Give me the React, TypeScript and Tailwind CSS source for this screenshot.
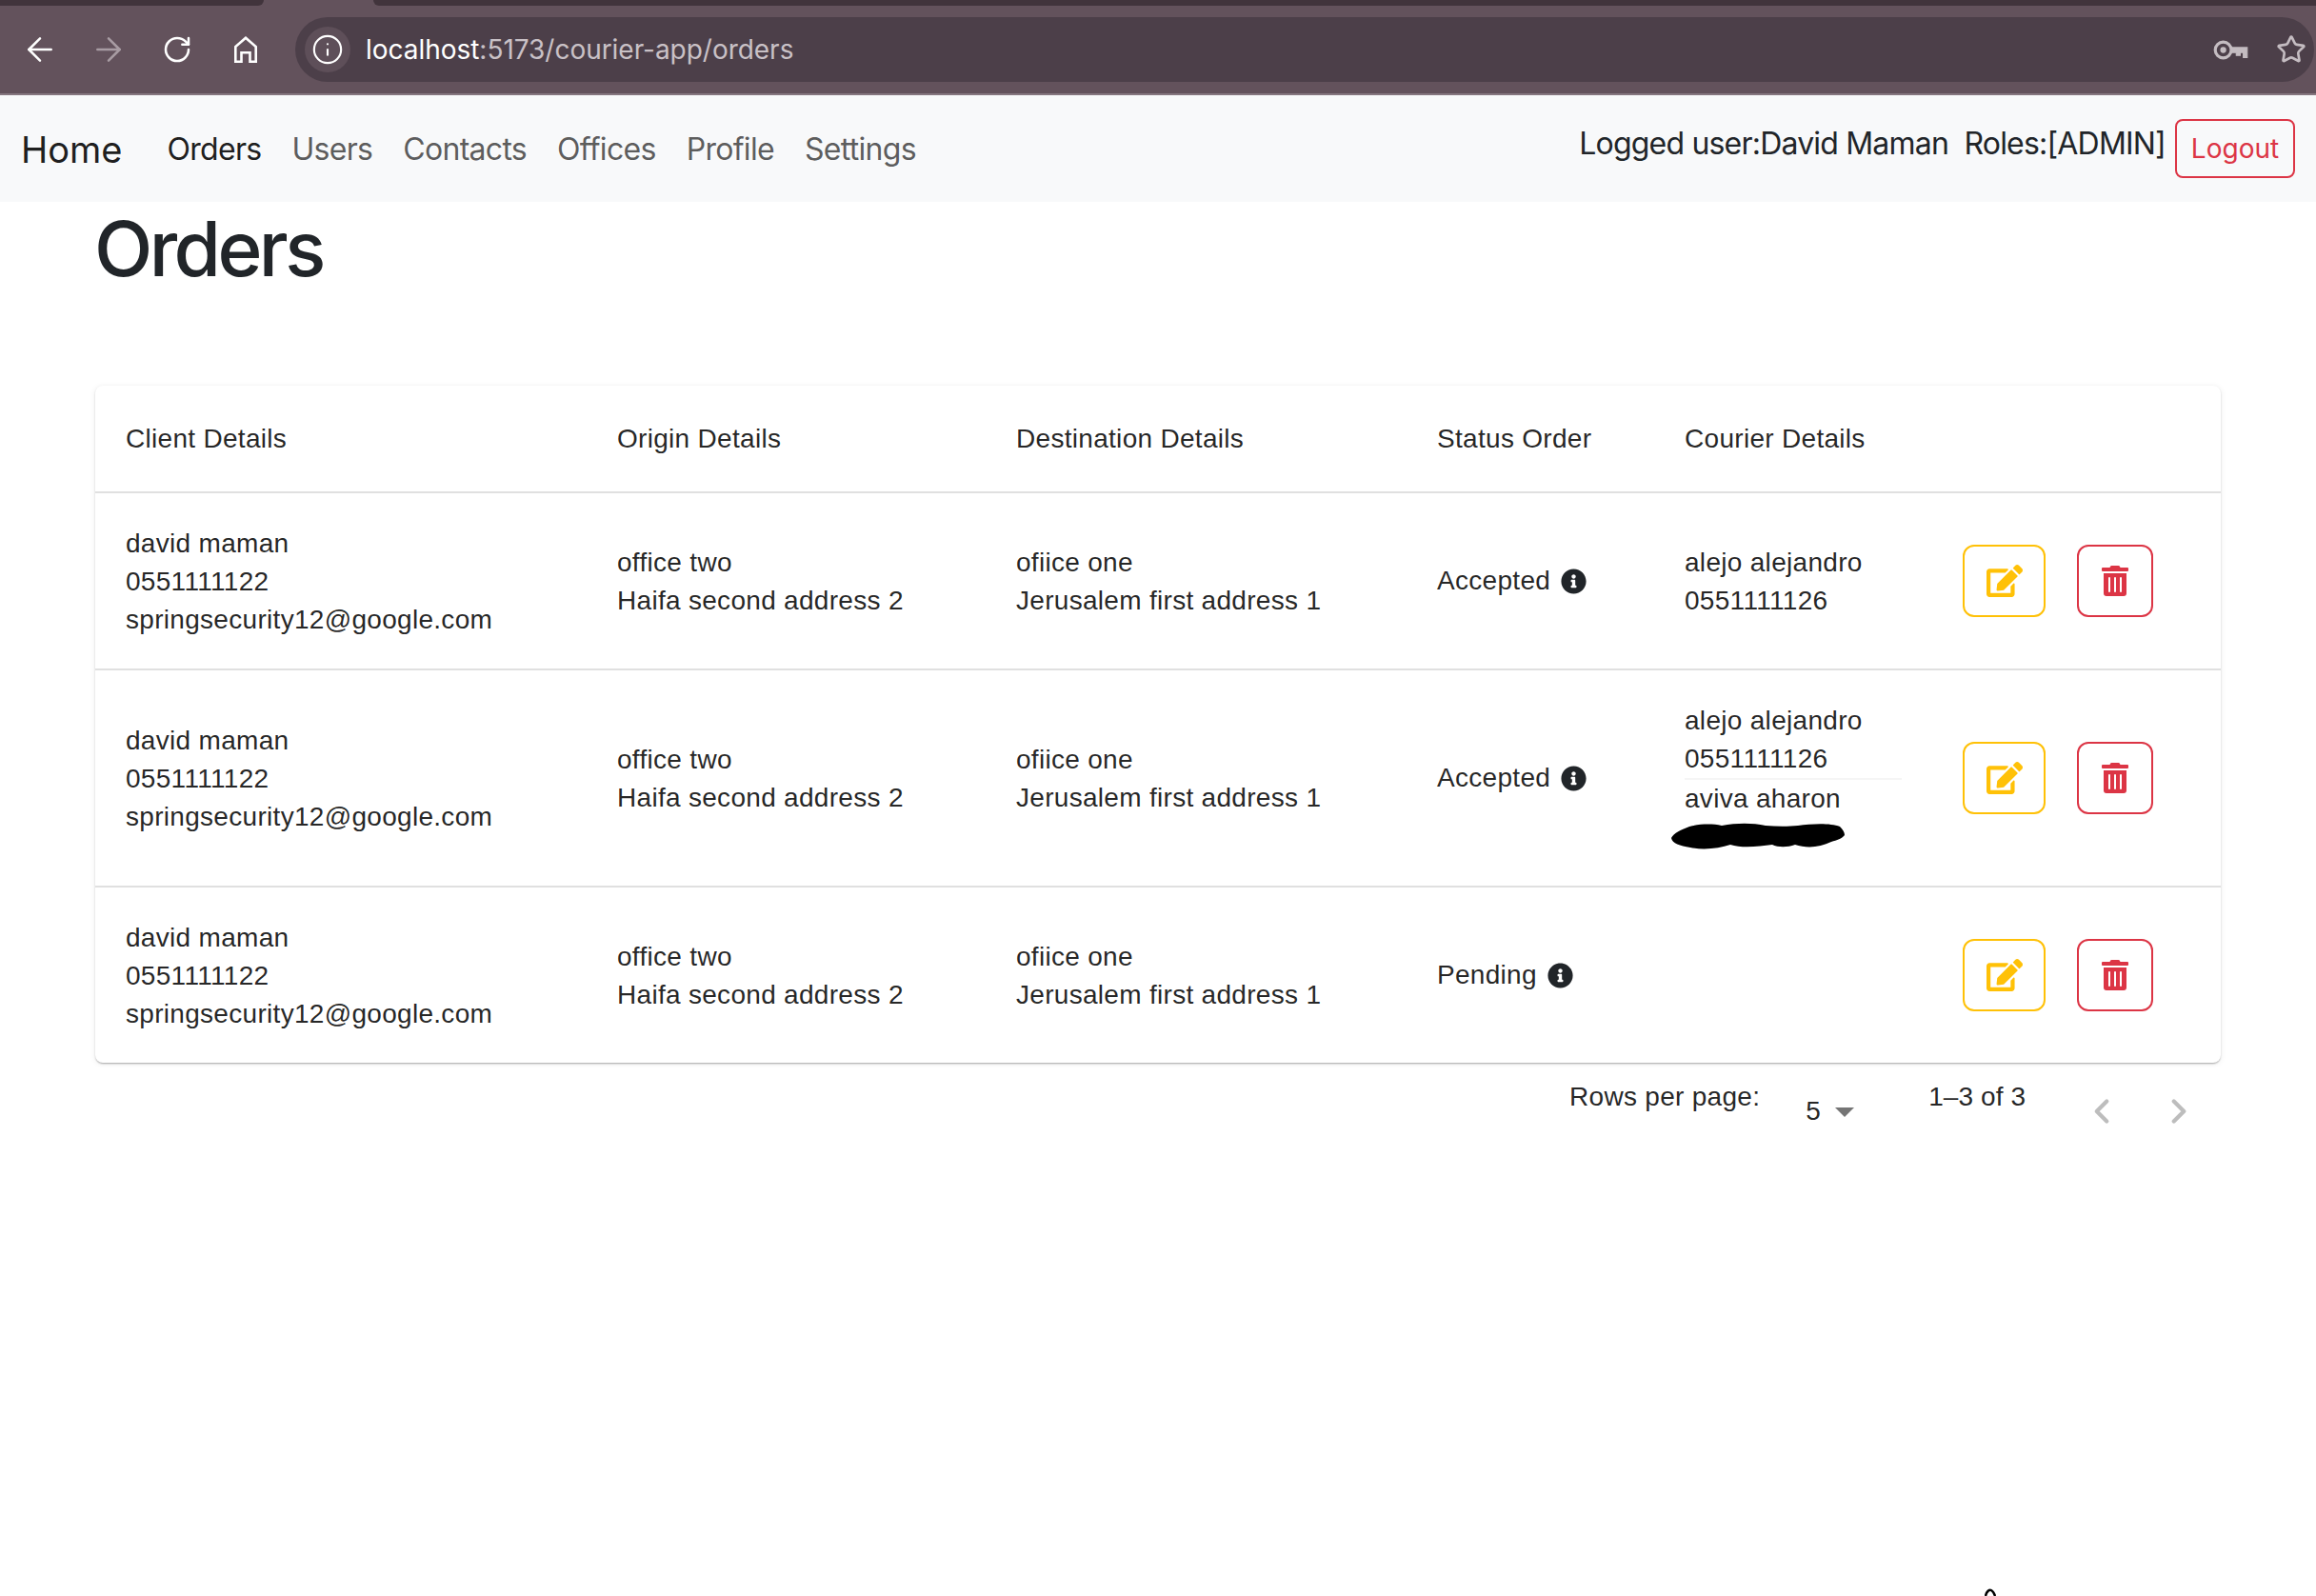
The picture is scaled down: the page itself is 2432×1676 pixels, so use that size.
import { ArrowLeft, ArrowRight, RotateCw, Star, Info, ChevronLeft, ChevronRight } from 'lucide-react';
import { FaEdit, FaTrashAlt, FaInfoCircle } from 'react-icons/fa';

const NAV_LINKS = ['Users', 'Contacts', 'Offices', 'Profile', 'Settings'];

function BrowserBar() {
  return (
    <div className="bg-[#63525c] h-[100px] border-b-2 border-[#85767f] flex flex-col font-['Inter',sans-serif]">
      {/* tab strip, the light gap is the active tab */}
      <div className="flex h-[6px] shrink-0">
        <div className="w-[277px] bg-[#41343c] rounded-br-[8px]" />
        <div className="w-[115px]" />
        <div className="flex-1 bg-[#41343c] rounded-bl-[8px]" />
      </div>
      <div className="flex items-center h-[68px] mt-[12px] pl-[6px]">
        <div className="w-[72px] flex justify-center">
          <ArrowLeft size={40} strokeWidth={1.5} className="text-white" />
        </div>
        <div className="w-[72px] flex justify-center">
          <ArrowRight size={40} strokeWidth={1.5} className="text-[#a89ca3]" />
        </div>
        <div className="w-[72px] flex justify-center">
          <RotateCw size={32} strokeWidth={1.9} className="text-white" />
        </div>
        <div className="w-[72px] flex justify-center">
          <svg viewBox="0 0 24 28" className="w-[24px] h-[28px] text-white" fill="none" stroke="currentColor" strokeWidth="2.6">
            <path d="M1.3 26.7V11L12 1.7 22.7 11v15.7h-6.2v-9.5h-9v9.5z" />
          </svg>
        </div>
        <div className="flex-1 h-[68px] ml-[16px] mr-[2px] bg-[#4c3f49] rounded-[34px] flex items-center pl-[10px] pr-[8px]">
          <div className="w-[48px] h-[48px] rounded-full bg-[#5e4f59] flex items-center justify-center">
            <Info size={34} strokeWidth={1.5} className="text-white" />
          </div>
          <div className="ml-[16px] text-[28px] tracking-[-0.03px] text-[#c9c1c6]">
            <span className="text-white">localhost</span>:5173/courier-app/orders
          </div>
          <svg viewBox="0 0 36 20" className="w-[38px] h-[21px] ml-auto mr-[1px] text-[#c4bcc1]" fill="none" stroke="currentColor" strokeWidth="3">
            <circle cx="10" cy="10" r="8" />
            <circle cx="10" cy="10" r="1.5" fill="currentColor" />
            <path d="M18 7.5h16v10h-4v-5h-3v3h-4v-3h-5" fill="currentColor" strokeWidth="1" />
          </svg>
          <Star size={32} strokeWidth={2} className="text-[#c4bcc1] ml-[27px]" />
        </div>
      </div>
    </div>
  );
}

function NavBar() {
  return (
    <nav className="h-[112px] bg-[#f8f9fa] flex items-center font-['Inter',sans-serif] relative">
      <a className="ml-[22px] mt-[2px] text-[38px] text-black/90">Home</a>
      <div className="flex ml-[47px] mt-[2px] text-[32px] tracking-[-0.7px] text-black/65 gap-[32px]">
        <a className="text-black/90">Orders</a>
        {NAV_LINKS.map((l) => (
          <a key={l}>{l}</a>
        ))}
      </div>
      <div className="ml-auto flex items-start pr-[22px]">
        <span className="text-[32px] tracking-[-0.8px] text-[#212529] mt-[2px] whitespace-pre">Logged user:David Maman  Roles:[ADMIN]</span>
        <button className="ml-[10px] w-[126px] h-[62px] border-2 border-[#dc3545] rounded-[8px] text-[28px] text-[#dc3545]">
          Logout
        </button>
      </div>
    </nav>
  );
}

function StatusCell({ label }: { label: string }) {
  return (
    <div className="flex items-center gap-[11px]">
      <span>{label}</span>
      <FaInfoCircle className="text-[27px] text-[#212529]" />
    </div>
  );
}

function Actions() {
  return (
    <div className="flex gap-[33px]">
      <button className="w-[87px] h-[76px] border-2 border-[#ffc107] rounded-[12px] flex items-center justify-center">
        <FaEdit className="text-[38px] text-[#ffc107] ml-[1px]" />
      </button>
      <button className="w-[80px] h-[76px] border-2 border-[#dc3545] rounded-[12px] flex items-center justify-center">
        <FaTrashAlt className="text-[32px] text-[#dc3545]" />
      </button>
    </div>
  );
}

function Scribble() {
  return (
    <svg viewBox="0 0 184 32" className="w-[184px] h-[32px] -ml-[15px] mt-[3px] block">
      <path
        d="M1 18C3 13 12 9 20 6c12-3 24-3 34-1 16-3 32-3 46 0 12 1 24 1 34 0 14-2 34-3 44 1 3 3 5 6 5 9-3 4-8 5-14 7-12 6-26 7-38 3-8 3-18 3-24 0-14 2-32 4-44 0-12 4-28 6-42 3C10 26 2 24 1 18z"
        fill="#000"
      />
    </svg>
  );
}

const ROWS = [
  { status: 'Accepted', courier: 'one' },
  { status: 'Accepted', courier: 'two' },
  { status: 'Pending', courier: 'none' },
];

function OrdersTable() {
  return (
    <div className="bg-white rounded-[8px] shadow-[0_2px_2px_-1px_rgba(0,0,0,0.2),0_1px_2px_0_rgba(0,0,0,0.14),0_1px_6px_0_rgba(0,0,0,0.08)] mx-[100px] mt-[112px]">
      <table className="w-full table-fixed border-collapse font-['Liberation_Sans',sans-serif] text-[28px] leading-[40px] text-black/87 tracking-[0.3px]">
        <thead>
          <tr className="h-[112px] border-b-2 border-[#e0e0e0] text-left">
            <th className="w-[516px] pl-[32px] font-normal">Client Details</th>
            <th className="w-[419px] pl-[32px] font-normal">Origin Details</th>
            <th className="w-[442px] pl-[32px] font-normal">Destination Details</th>
            <th className="w-[260px] pl-[32px] font-normal">Status Order</th>
            <th className="w-[292px] pl-[32px] font-normal">Courier Details</th>
            <th />
          </tr>
        </thead>
        <tbody>
          {ROWS.map((row, i) => (
            <tr key={i} className={i < 2 ? 'border-b-2 border-[#e0e0e0]' : ''}>
              <td className="px-[32px] pt-[33px] pb-[31px]">
                david maman<br />0551111122<br />springsecurity12@google.com
              </td>
              <td className="px-[32px] pt-[33px] pb-[31px]">
                office two<br />Haifa second address 2
              </td>
              <td className="px-[32px] pt-[33px] pb-[31px]">
                ofiice one<br />Jerusalem first address 1
              </td>
              <td className="p-[32px]">
                <StatusCell label={row.status} />
              </td>
              <td className="px-[32px] pt-[33px] pb-[31px]">
                {row.courier !== 'none' && (
                  <>
                    alejo alejandro<br />0551111126
                  </>
                )}
                {row.courier === 'two' && (
                  <>
                    <hr className="border-t-2 border-[#f5f5f5]" />
                    aviva aharon
                    <div className="h-[37px]">
                      <Scribble />
                    </div>
                  </>
                )}
              </td>
              <td className="p-[32px]">
                <Actions />
              </td>
            </tr>
          ))}
        </tbody>
      </table>
    </div>
  );
}

function Pagination() {
  return (
    <div className="flex items-start mx-[100px] pl-[1548px] font-['Liberation_Sans',sans-serif] text-[28px] leading-[40px] text-black/87 tracking-[0.3px] mt-[16px]">
      <span className="whitespace-nowrap">Rows per page:</span>
      <div className="ml-[48px] mt-[15px] flex items-center">
        <span>5</span>
        <svg viewBox="0 0 20 10" className="w-[20px] h-[10px] ml-[15px] mt-[2px]">
          <path d="M0 0h20L10 10z" fill="#757575" />
        </svg>
      </div>
      <span className="ml-[78px] whitespace-nowrap tracking-[0.1px]">1–3 of 3</span>
      <ChevronLeft size={42} strokeWidth={2.4} className="text-[#bdbdbd] ml-[59px] mt-[14px]" />
      <ChevronRight size={42} strokeWidth={2.4} className="text-[#bdbdbd] ml-[39px] mt-[14px]" />
    </div>
  );
}

export default function App() {
  return (
    <div className="relative min-h-[1676px] h-[1676px] overflow-hidden bg-white">
      <BrowserBar />
      <NavBar />
      <h1 className="ml-[99px] mt-[1px] h-[80px] text-[80px] leading-[96px] tracking-[-3.6px] font-medium text-[#212529] font-['Inter',sans-serif]">
        Orders
      </h1>
      <OrdersTable />
      <Pagination />
      {/* bit of the pen scribble at the very bottom edge */}
      <svg viewBox="0 0 12 8" className="absolute left-[2084px] top-[1668px] w-[12px] h-[8px]">
        <path d="M1 8C2 3 5 1 7 2s3 3 4 6" fill="none" stroke="#000" strokeWidth="2.5" />
      </svg>
    </div>
  );
}
